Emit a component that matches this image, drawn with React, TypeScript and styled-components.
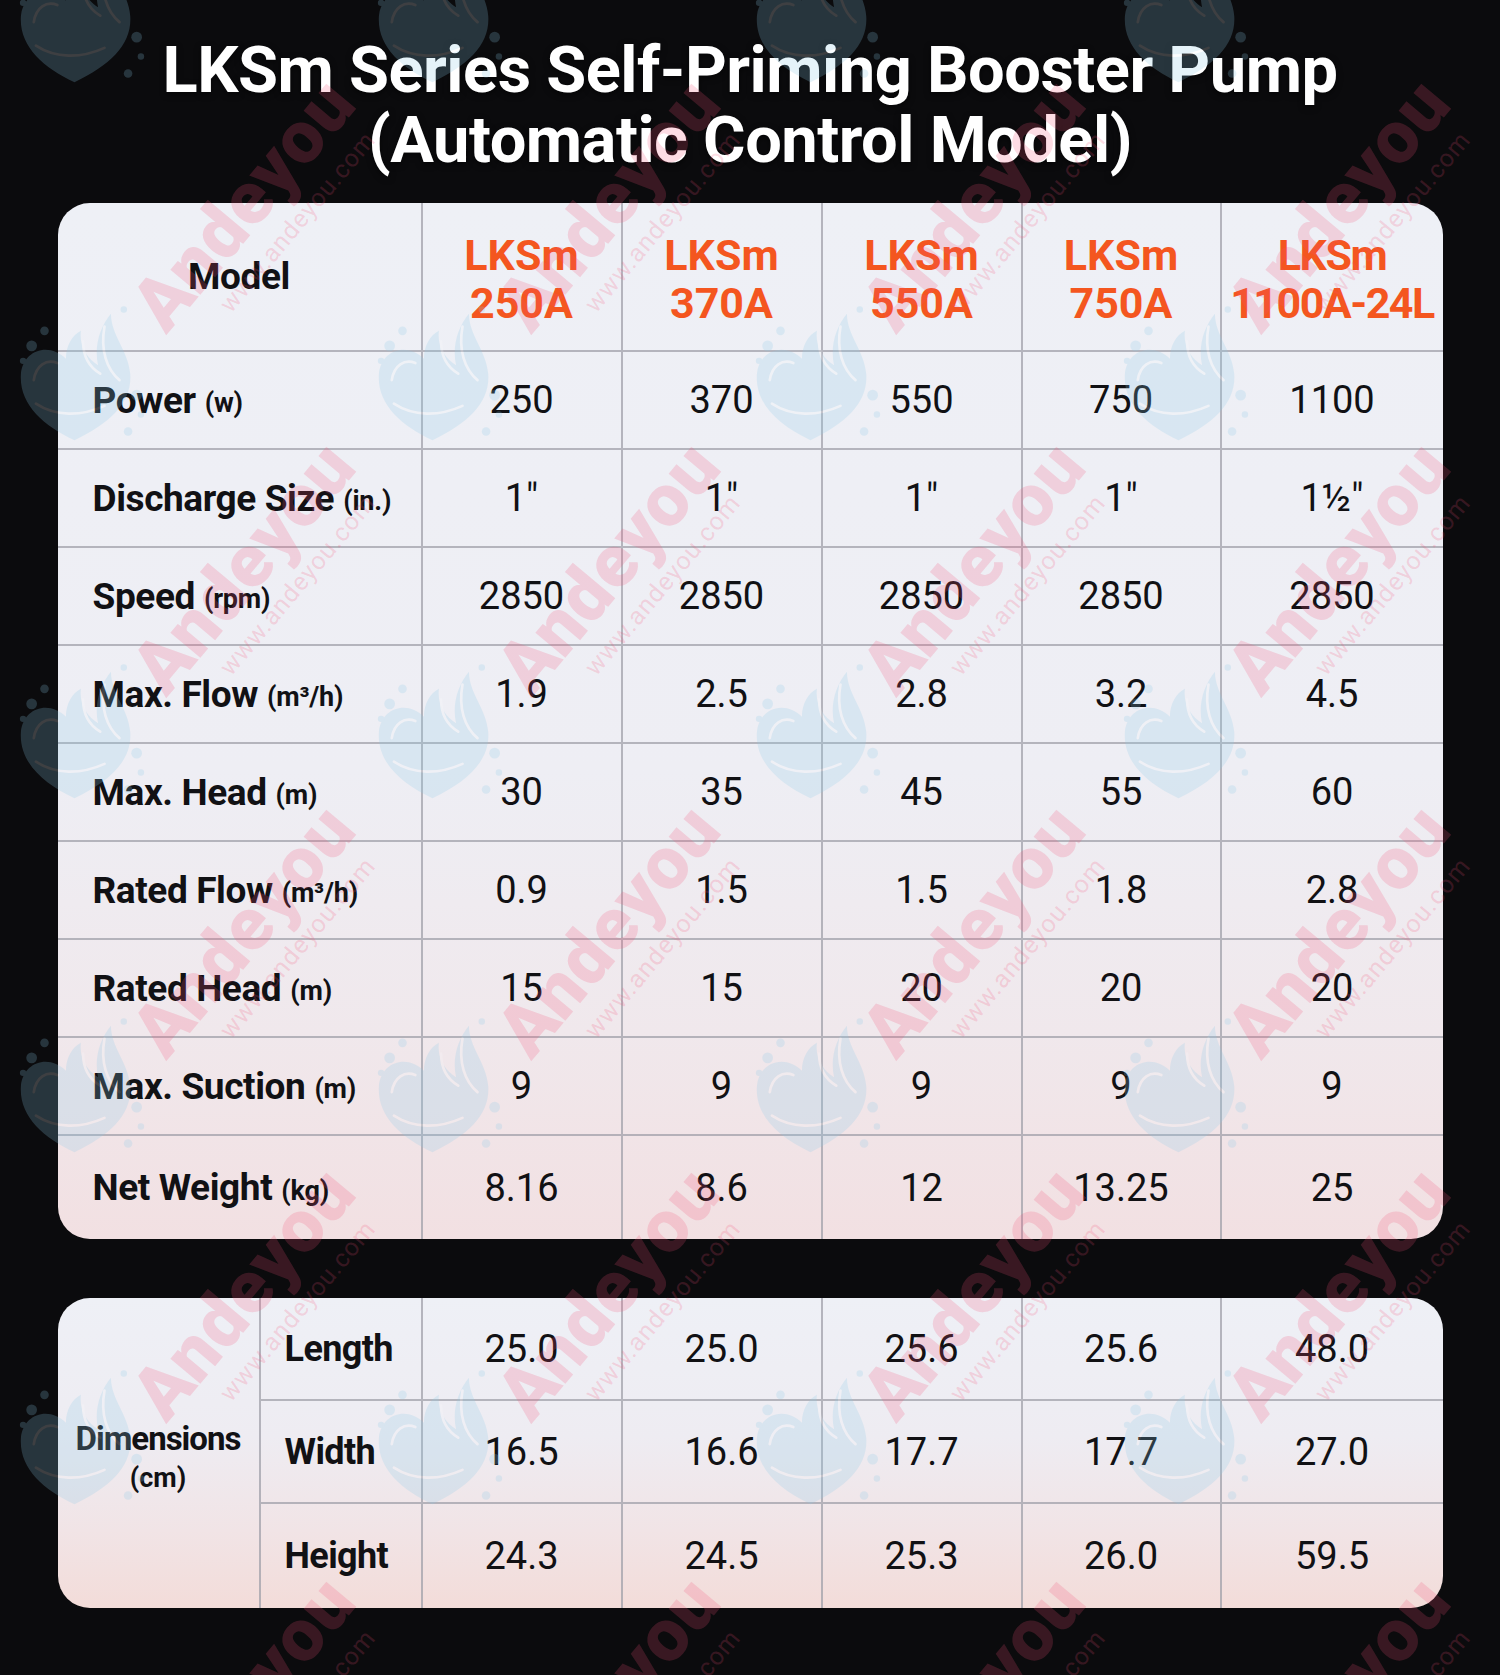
import React from "react";
import styled, { createGlobalStyle } from "styled-components";

const GlobalStyle = createGlobalStyle`
  html, body {
    margin: 0;
    padding: 0;
    background: #0b0b0d;
  }
  * {
    box-sizing: border-box;
  }
`;

const FONT = `Roboto, "Liberation Sans", Arial, sans-serif`;
const LINE = "2px solid rgba(160, 160, 170, 0.75)";

const models = ["250A", "370A", "550A", "750A", "1100A-24L"];

interface SpecRow {
  label: string;
  unit: React.ReactNode;
  values: string[];
}

const specs: SpecRow[] = [
  { label: "Power", unit: "(w)", values: ["250", "370", "550", "750", "1100"] },
  { label: "Discharge Size", unit: "(in.)", values: ['1"', '1"', '1"', '1"', '1½"'] },
  { label: "Speed", unit: "(rpm)", values: ["2850", "2850", "2850", "2850", "2850"] },
  { label: "Max. Flow", unit: "(m³/h)", values: ["1.9", "2.5", "2.8", "3.2", "4.5"] },
  { label: "Max. Head", unit: "(m)", values: ["30", "35", "45", "55", "60"] },
  { label: "Rated Flow", unit: "(m³/h)", values: ["0.9", "1.5", "1.5", "1.8", "2.8"] },
  { label: "Rated Head", unit: "(m)", values: ["15", "15", "20", "20", "20"] },
  { label: "Max. Suction", unit: "(m)", values: ["9", "9", "9", "9", "9"] },
  { label: "Net Weight", unit: "(kg)", values: ["8.16", "8.6", "12", "13.25", "25"] },
];

const dimensions = [
  { label: "Length", values: ["25.0", "25.0", "25.6", "25.6", "48.0"] },
  { label: "Width", values: ["16.5", "16.6", "17.7", "17.7", "27.0"] },
  { label: "Height", values: ["24.3", "24.5", "25.3", "26.0", "59.5"] },
];

// watermark tiles laid over the whole sheet
const markCols = [255, 620, 985, 1350];
const markRows = [214, 577, 940, 1303, 1712];
const logoCols = [82, 440, 818, 1186];
const logoRows = [22, 380, 738, 1092, 1444];

export default function App() {
  return (
    <>
      <GlobalStyle />
      <Page>
        <Title>
          LKSm Series Self-Priming Booster Pump
          <br />
          (Automatic Control Model)
        </Title>

        <SpecTable>
          <HeadCell>
            <LabelName>Model</LabelName>
          </HeadCell>
          {models.map((m, i) => (
            <ModelCell key={m} $last={i === models.length - 1}>
              LKSm
              <br />
              {m}
            </ModelCell>
          ))}
          {specs.map((row, r) => [
            <LabelCell key={row.label} $lastRow={r === specs.length - 1}>
              <LabelName>{row.label}</LabelName>
              <Unit>{row.unit}</Unit>
            </LabelCell>,
            ...row.values.map((v, i) => (
              <ValueCell
                key={row.label + i}
                $lastCol={i === row.values.length - 1}
                $lastRow={r === specs.length - 1}
              >
                {v}
              </ValueCell>
            )),
          ])}
        </SpecTable>

        <DimTable>
          <DimHead>
            <DimTitle>Dimensions</DimTitle>
            <DimUnit>(cm)</DimUnit>
          </DimHead>
          {dimensions.map((row, r) => [
            <DimLabel key={row.label} $lastRow={r === dimensions.length - 1}>
              {row.label}
            </DimLabel>,
            ...row.values.map((v, i) => (
              <ValueCell
                key={row.label + i}
                $lastCol={i === row.values.length - 1}
                $lastRow={r === dimensions.length - 1}
              >
                {v}
              </ValueCell>
            )),
          ])}
        </DimTable>

        <Watermarks>
          {logoRows.map((y) =>
            logoCols.map((x) => (
              <Logo key={`l${x}-${y}`} style={{ left: x, top: y }}>
                <LogoMark />
              </Logo>
            ))
          )}
          {markRows.map((y) =>
            markCols.map((x) => (
              <Mark key={`m${x}-${y}`} style={{ left: x, top: y }}>
                <Brand>Andeyou</Brand>
                <Site>www.andeyou.com</Site>
              </Mark>
            ))
          )}
        </Watermarks>
      </Page>
    </>
  );
}

const LogoMark: React.FC = () => (
  <svg width="140" height="150" viewBox="0 0 130 140">
    <g fill="#8ccbe8">
      <path d="M58 128 C 28 114, 6 94, 8 66 C 10 44, 34 36, 50 52 C 50 40, 56 30, 64 26 C 62 40, 70 52, 80 58 C 76 40, 82 22, 92 10 C 92 30, 108 44, 110 66 C 112 92, 92 112, 58 128 Z" />
      <circle cx="18" cy="40" r="5" />
      <circle cx="10" cy="54" r="3" />
      <circle cx="30" cy="26" r="4" />
      <circle cx="116" cy="86" r="5" />
      <circle cx="120" cy="104" r="3" />
      <circle cx="108" cy="120" r="4" />
      <circle cx="104" cy="6" r="3" />
    </g>
    <g fill="none" stroke="#ffffff" strokeWidth="2.5" strokeLinecap="round" opacity="0.9">
      <path d="M22 94 C 40 106, 64 106, 86 96" />
      <path d="M86 22 C 82 44, 88 62, 100 72" />
      <path d="M20 72 C 22 58, 32 52, 42 56" />
      <path d="M66 36 C 66 50, 72 60, 82 66" />
    </g>
  </svg>
);

const Page = styled.div`
  position: relative;
  width: 1500px;
  height: 1675px;
  overflow: hidden;
  background: #0b0b0d;
  padding-top: 35px;
  display: flex;
  flex-direction: column;
  align-items: center;
  font-family: ${FONT};
`;

const Title = styled.h1`
  margin: 0;
  color: #ffffff;
  font-family: ${FONT};
  font-weight: 700;
  font-size: 65px;
  line-height: 70px;
  letter-spacing: -0.5px;
  text-align: center;
  text-shadow: 0 2px 6px rgba(0, 0, 0, 0.6);
`;

const SpecTable = styled.div`
  margin-top: 28px;
  width: 1385px;
  height: 1036px;
  display: grid;
  grid-template-columns: 365px 200px 200px 200px 199px 221px;
  grid-template-rows: 149px repeat(8, 98px) 1fr;
  border-radius: 32px;
  overflow: hidden;
  background: linear-gradient(180deg, #eef0f6 0%, #eeeef4 55%, #f0e8ec 80%, #f2e0e2 100%);
`;

const DimTable = styled.div`
  margin-top: 59px;
  width: 1385px;
  height: 310px;
  display: grid;
  grid-template-columns: 203px 162px 200px 200px 200px 199px 221px;
  grid-template-rows: 103px 103px 1fr;
  border-radius: 32px;
  overflow: hidden;
  background: linear-gradient(180deg, #eef0f6 0%, #eeecf2 45%, #f1e4e6 75%, #f3dcd9 100%);
`;

const Cell = styled.div`
  display: flex;
  align-items: center;
  color: #111114;
`;

const HeadCell = styled(Cell)`
  justify-content: center;
  border-right: ${LINE};
  border-bottom: ${LINE};
`;

const ModelCell = styled(Cell)<{ $last: boolean }>`
  justify-content: center;
  text-align: center;
  color: #f4561f;
  font-weight: 700;
  font-size: 43px;
  line-height: 48px;
  letter-spacing: ${(p) => (p.$last ? "-1.5px" : "0")};
  white-space: nowrap;
  padding-top: 4px;
  border-right: ${(p) => (p.$last ? "none" : LINE)};
  border-bottom: ${LINE};
`;

const LabelCell = styled(Cell)<{ $lastRow: boolean }>`
  padding-left: 35px;
  gap: 9px;
  border-right: ${LINE};
  border-bottom: ${(p) => (p.$lastRow ? "none" : LINE)};
`;

const LabelName = styled.span`
  font-weight: 700;
  font-size: 37px;
  letter-spacing: -0.4px;
  color: #111114;
`;

const Unit = styled.span`
  font-weight: 700;
  font-size: 27px;
  letter-spacing: -0.2px;
  padding-top: 6px;
  color: #111114;
`;

const ValueCell = styled(Cell)<{ $lastCol: boolean; $lastRow: boolean }>`
  justify-content: center;
  font-weight: 400;
  font-size: 38px;
  border-right: ${(p) => (p.$lastCol ? "none" : LINE)};
  border-bottom: ${(p) => (p.$lastRow ? "none" : LINE)};
`;

const DimHead = styled.div`
  grid-row: 1 / span 3;
  display: flex;
  flex-direction: column;
  align-items: center;
  justify-content: center;
  gap: 4px;
  padding-top: 6px;
  border-right: ${LINE};
  color: #111114;
  font-weight: 700;
`;

const DimTitle = styled.span`
  font-size: 33px;
  letter-spacing: -1px;
`;

const DimUnit = styled.span`
  font-size: 27px;
`;

const DimLabel = styled(Cell)<{ $lastRow: boolean }>`
  padding-left: 24px;
  font-weight: 700;
  font-size: 36px;
  letter-spacing: -0.6px;
  border-right: ${LINE};
  border-bottom: ${(p) => (p.$lastRow ? "none" : LINE)};
`;

const Watermarks = styled.div`
  position: absolute;
  inset: 0;
  pointer-events: none;
  overflow: hidden;
`;

const Mark = styled.div`
  position: absolute;
  display: flex;
  flex-direction: column;
  transform: translate(-50%, -50%) rotate(-50deg);
  color: rgba(245, 80, 120, 0.2);
  font-family: ${FONT};
  white-space: nowrap;
`;

const Brand = styled.span`
  font-weight: 900;
  font-size: 74px;
  line-height: 76px;
  letter-spacing: 1px;
`;

const Site = styled.span`
  font-weight: 400;
  font-size: 25px;
  line-height: 30px;
  padding-left: 58px;
  letter-spacing: 1px;
`;

const Logo = styled.div`
  position: absolute;
  transform: translate(-50%, -50%);
  opacity: 0.22;
`;
